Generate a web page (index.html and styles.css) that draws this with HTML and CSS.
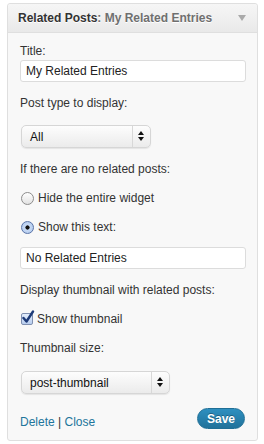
FILE: index.html
```html
<!DOCTYPE html>
<html lang="en">

<head>
    <meta charset="UTF-8">
    <meta name="viewport" content="width=device-width, initial-scale=1.0">
    <title>Related Posts Widget</title>
    <link rel="stylesheet" href="styles.css">
</head>

<body>
    <div class="widget">
        <div class="widget-top">
            <h4>Related Posts<span class="in-widget-title">: My Related Entries</span></h4>
            <span class="widget-toggle"></span>
        </div>

        <div class="widget-inside">
            <label class="label title-label">Title:</label>
            <input class="widefat" type="text" value="My Related Entries">

            <label class="label">Post type to display:</label>
            <div class="fake-select select-short">
                <span class="select-value">All</span>
                <span class="select-arrows"></span>
            </div>

            <label class="label">If there are no related posts:</label>

            <div class="option">
                <span class="radio"></span>
                <span>Hide the entire widget</span>
            </div>

            <div class="option">
                <span class="radio checked"></span>
                <span>Show this text:</span>
            </div>

            <input class="widefat" type="text" value="No Related Entries">

            <label class="label">Display thumbnail with related posts:</label>

            <div class="option">
                <span class="checkbox">
                    <svg width="14" height="15" viewBox="0 0 14 15">
                        <path d="M2.5 8 L5.5 11.5 L12 1.5" fill="none" stroke="#1d3a78" stroke-width="2.4" stroke-linecap="round" stroke-linejoin="round"/>
                    </svg>
                </span>
                <span>Show thumbnail</span>
            </div>

            <label class="label">Thumbnail size:</label>
            <div class="fake-select select-long">
                <span class="select-value">post-thumbnail</span>
                <span class="select-arrows"></span>
            </div>

            <div class="widget-control-actions">
                <div class="links">
                    <a href="#">Delete</a> | <a href="#">Close</a>
                </div>
                <button class="button-primary">Save</button>
            </div>
        </div>
    </div>
</body>

</html>
```

FILE: styles.css
```css
body {
    margin: 0;
    padding: 3px 6px 3px 7px;
    background: white;
    font-family: "Liberation Sans", Arial, sans-serif;
    font-size: 12px;
    line-height: 16px;
    color: #333;
}

.widget {
    border: 1px solid #dfdfdf;
    border-radius: 3px;
    background: #f8f8f8;
}

.widget-top {
    display: flex;
    align-items: center;
    justify-content: space-between;
    height: 28px;
    padding: 0 10px 0 10px;
    background: linear-gradient(to bottom, #f6f6f6, #e9e9e9);
    border-bottom: 1px solid #dfdfdf;
    border-radius: 3px 3px 0 0;
}

.widget-top h4 {
    margin: 0;
    font-size: 12px;
    font-weight: bold;
    color: #333;
    text-shadow: 0 1px 0 #fff;
}

.in-widget-title {
    color: #6f6f6f;
}

.widget-toggle {
    width: 0;
    height: 0;
    border-left: 4px solid transparent;
    border-right: 4px solid transparent;
    border-top: 6px solid #aaa;
    margin-right: 1px;
}

.widget-inside {
    display: flex;
    flex-direction: column;
    align-items: flex-start;
    padding: 10px 11px 10px 12px;
}

.label {
    display: block;
    margin-top: 13px;
}

.label.title-label {
    margin-top: 0;
}

.widefat {
    box-sizing: border-box;
    width: 100%;
    height: 22px;
    margin: 1px 0 0 0;
    padding: 0 5px;
    border: 1px solid #dcdcdc;
    border-radius: 3px;
    background: white;
    font-family: inherit;
    font-size: 12px;
    color: #222;
}

.option + .widefat {
    margin-top: 12px;
}

.fake-select {
    display: flex;
    align-items: center;
    box-sizing: border-box;
    height: 23px;
    margin: 14px 0 0 1px;
    border: 1px solid #d6d6d6;
    border-radius: 5px;
    background: linear-gradient(to bottom, #fdfdfd, #ebebeb);
    box-shadow: 0 1px 1px rgba(0, 0, 0, 0.08);
}

.select-short {
    width: 130px;
}

.select-long {
    width: 149px;
    margin-top: 15px;
}

.select-value {
    flex: 1;
    padding-left: 8px;
    color: #111;
}

.select-arrows {
    position: relative;
    width: 17px;
    height: 100%;
    border-left: 1px solid #d8d8d8;
}

.select-arrows::before,
.select-arrows::after {
    content: "";
    position: absolute;
    left: 5px;
    border-left: 3px solid transparent;
    border-right: 3px solid transparent;
}

.select-arrows::before {
    top: 5px;
    border-bottom: 4px solid #111;
}

.select-arrows::after {
    top: 11px;
    border-top: 4px solid #111;
}

.option {
    display: flex;
    align-items: center;
    gap: 4px;
    margin-top: 13px;
    margin-left: 1px;
}

.radio {
    box-sizing: border-box;
    width: 13px;
    height: 13px;
    border: 1px solid #8c8c8c;
    border-radius: 50%;
    background: linear-gradient(to bottom, #fff, #e2e2e2);
}

.radio.checked {
    border-color: #5a74a8;
    background: radial-gradient(circle, #111 0, #111 1.8px, #c9dbf5 2.4px, #a9c3ea 100%);
}

.checkbox {
    box-sizing: border-box;
    width: 12px;
    height: 12px;
    border: 1px solid #7f8fb0;
    border-radius: 2px;
    background: linear-gradient(to bottom, #e4eefc, #b8cdee);
    position: relative;
}

.checkbox svg {
    position: absolute;
    left: -1px;
    top: -4px;
}

.widget-control-actions {
    align-self: stretch;
    display: flex;
    align-items: flex-end;
    justify-content: space-between;
    margin-top: 14px;
}

.links {
    color: #333;
}

.links a {
    color: #21759b;
    text-decoration: none;
}

.button-primary {
    height: 21px;
    margin: 0 1px 1px 0;
    padding: 0 9px;
    border: 1px solid #1f6f96;
    border-radius: 11px;
    background: linear-gradient(to bottom, #2e8fc0, #21729a);
    color: white;
    font-family: inherit;
    font-size: 12px;
    font-weight: bold;
    text-shadow: 0 -1px 0 rgba(0, 0, 0, 0.3);
}
```
